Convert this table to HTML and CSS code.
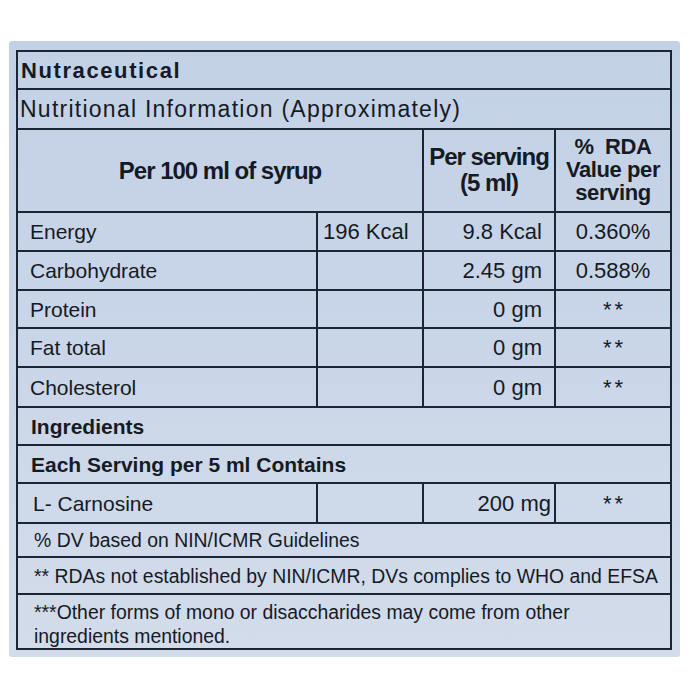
FILE: index.html
```html
<!DOCTYPE html>
<html lang="en">
<head>
<meta charset="utf-8">
<title>Nutraceutical</title>
<link rel="stylesheet" href="styles.css">
</head>
<body>
<div class="card">
  <div class="sheet">
    <div class="row h38"><div class="cell full title">Nutraceutical</div></div>
    <div class="row h40"><div class="cell full subtitle">Nutritional Information (Approximately)</div></div>
    <div class="row h83">
      <div class="cell c12 head">Per 100 ml of syrup</div>
      <div class="cell c3 head head-serv">Per serving<br>(5 ml)</div>
      <div class="cell c4 head head-rda">%&nbsp; RDA<br>Value per<br>serving</div>
    </div>
    <div class="row h39">
      <div class="cell c1 label">Energy</div>
      <div class="cell c2 num-left">196 Kcal</div>
      <div class="cell c3 num">9.8 Kcal</div>
      <div class="cell c4 rda">0.360%</div>
    </div>
    <div class="row h39">
      <div class="cell c1 label">Carbohydrate</div>
      <div class="cell c2"></div>
      <div class="cell c3 num">2.45 gm</div>
      <div class="cell c4 rda">0.588%</div>
    </div>
    <div class="row h38">
      <div class="cell c1 label">Protein</div>
      <div class="cell c2"></div>
      <div class="cell c3 num">0 gm</div>
      <div class="cell c4 rda stars">**</div>
    </div>
    <div class="row h39">
      <div class="cell c1 label">Fat total</div>
      <div class="cell c2"></div>
      <div class="cell c3 num">0 gm</div>
      <div class="cell c4 rda stars">**</div>
    </div>
    <div class="row h40">
      <div class="cell c1 label">Cholesterol</div>
      <div class="cell c2"></div>
      <div class="cell c3 num">0 gm</div>
      <div class="cell c4 rda stars">**</div>
    </div>
    <div class="row h38"><div class="cell full section">Ingredients</div></div>
    <div class="row h38"><div class="cell full section">Each Serving per 5 ml Contains</div></div>
    <div class="row h40">
      <div class="cell c1 label label-ing">L- Carnosine</div>
      <div class="cell c2"></div>
      <div class="cell c3 num num-tight">200 mg</div>
      <div class="cell c4 rda stars">**</div>
    </div>
    <div class="row h34"><div class="cell full note">% DV based on NIN/ICMR Guidelines</div></div>
    <div class="row h37"><div class="cell full note">** RDAs not established by NIN/ICMR, DVs complies to WHO and EFSA</div></div>
    <div class="row h53 last"><div class="cell full note note-multi">***Other forms of mono or disaccharides may come from other<br>ingredients mentioned.</div></div>
  </div>
</div>
</body>
</html>
```

FILE: styles.css
```css
* {
  box-sizing: border-box;
}

html, body {
  margin: 0;
  padding: 0;
  background: #ffffff;
}

body {
  font-family: "Liberation Sans", Arial, sans-serif;
  color: #151a25;
}

.card {
  margin: 41px 0 0 9px;
  width: 671px;
  height: 616px;
  padding: 9px 8px 7px 7px;
  background: linear-gradient(180deg, #c3d1e6 0%, #c9d5e8 45%, #d3dcea 100%);
  border-radius: 3px;
}

.sheet {
  width: 656px;
  border: 2px solid #1b2536;
  display: flex;
  flex-direction: column;
}

.row {
  display: flex;
  border-bottom: 2px solid #1b2536;
}

.row.last {
  border-bottom: none;
}

.h34 { height: 34px; }
.h37 { height: 37px; }
.h38 { height: 38px; }
.h39 { height: 39px; }
.h40 { height: 40px; }
.h53 { height: 53px; }
.h83 { height: 83px; }

.cell {
  display: flex;
  align-items: center;
  height: 100%;
  white-space: nowrap;
}

.c1 { width: 300px; border-right: 2px solid #1b2536; }
.c2 { width: 106px; border-right: 2px solid #1b2536; }
.c3 { width: 132px; border-right: 2px solid #1b2536; }
.c4 { flex: 1; }
.c12 { width: 406px; border-right: 2px solid #1b2536; }
.full { flex: 1; }

.title {
  font-size: 22px;
  font-weight: bold;
  letter-spacing: 1.6px;
  padding-left: 3px;
  padding-top: 1px;
}

.subtitle {
  font-size: 23px;
  letter-spacing: 1.25px;
  padding-left: 2px;
}

.head {
  font-size: 24px;
  font-weight: bold;
  letter-spacing: -1px;
  justify-content: center;
  text-align: center;
  line-height: 23px;
}

.head-serv {
  line-height: 26px;
  padding-bottom: 2px;
}

.head-rda {
  font-size: 22px;
  letter-spacing: -0.4px;
  line-height: 23px;
  padding-bottom: 2px;
}

.label {
  font-size: 21px;
  padding-left: 12px;
  padding-top: 1px;
}

.label-ing {
  padding-left: 15px;
}

.num-left {
  font-size: 22px;
  padding-left: 5px;
  padding-top: 1px;
}

.num {
  font-size: 22px;
  justify-content: flex-end;
  padding-right: 12px;
  padding-top: 1px;
}

.num-tight {
  padding-right: 3px;
}

.rda {
  font-size: 22px;
  justify-content: center;
  padding-top: 1px;
}

.stars {
  letter-spacing: 3px;
  padding-left: 3px;
}

.section {
  font-size: 21px;
  font-weight: bold;
  padding-left: 13px;
  padding-top: 1px;
}

.note {
  font-size: 19.4px;
  padding-left: 16px;
  padding-top: 1px;
}

.note-multi {
  line-height: 24px;
  align-items: flex-start;
  padding-top: 5px;
}
```
